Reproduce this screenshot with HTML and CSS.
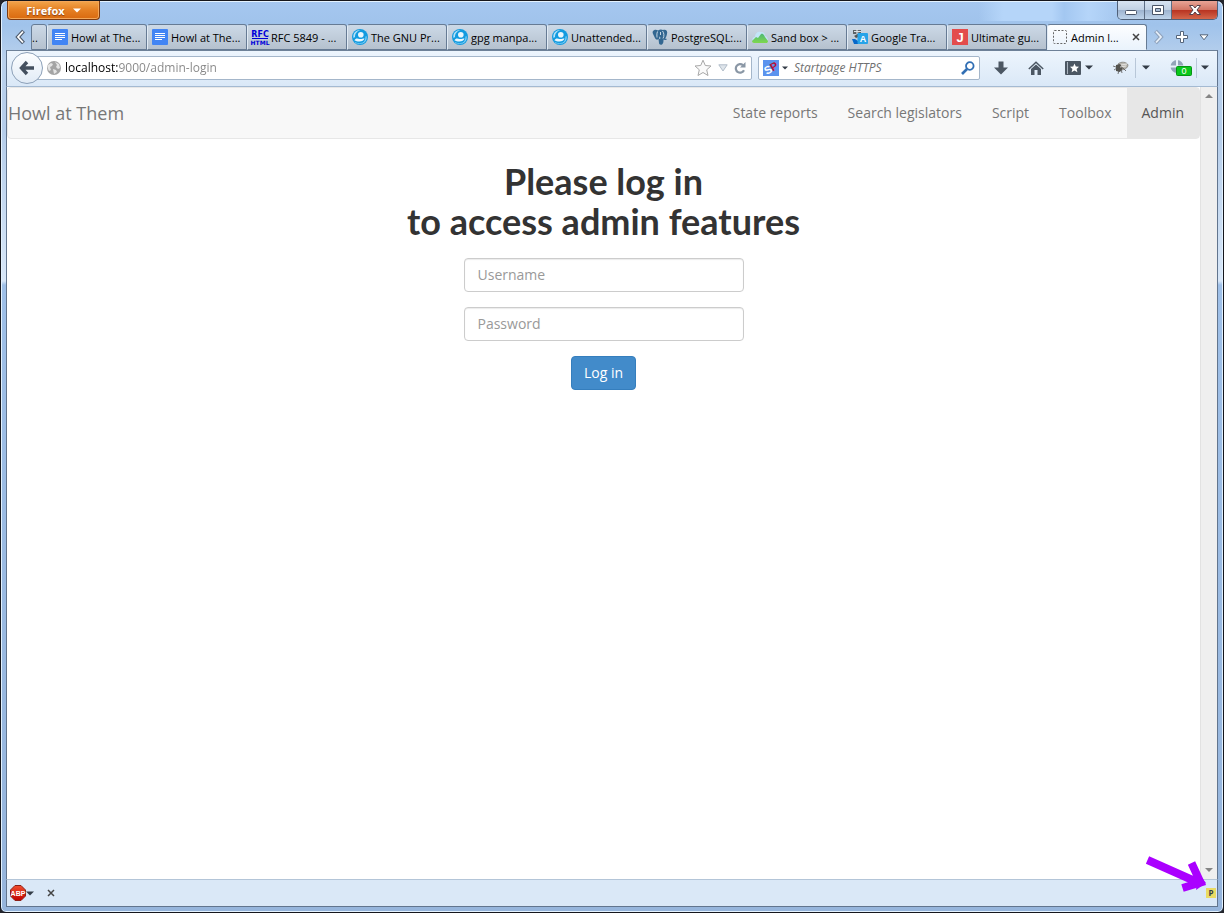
FILE: index.html
```html
<!DOCTYPE html>
<html lang="en">
<head>
<meta charset="utf-8">
<meta name="viewport" content="width=device-width, initial-scale=1">
<title>Admin login</title>
<link rel="stylesheet" href="styles.css">
</head>
<body>
<svg class="defs" aria-hidden="true">
  <defs>
    <linearGradient id="redsign" x1="0" y1="0" x2="0" y2="1"><stop offset="0" stop-color="#f05030"/><stop offset="1" stop-color="#c00000"/></linearGradient>
    <linearGradient id="hill" x1="0" y1="0" x2="0" y2="1"><stop offset="0" stop-color="#4fb878"/><stop offset="1" stop-color="#7fd84c"/></linearGradient>
  </defs>
  <symbol id="doc" viewBox="0 0 16 16"><rect width="16" height="16" rx="1" fill="#4285f4"/><path d="M3 4.500h10M3 6.500h10M3 8.500h10M3 10.500h7" stroke="#fff" stroke-width="1.100"/></symbol>
  <symbol id="swirl" viewBox="0 0 16 16"><circle cx="8" cy="8" r="8" fill="#129be0"/><path d="M1.500 9C.5 4 4 1 8.500 1c-3 1-5.500 3-5.500 7z" fill="#b5e2f8"/><path d="M14.500 7c1 4-1.500 7-5.500 8 3-1.500 4.500-4 4.500-7.500z" fill="#7fcdf4"/><circle cx="8.800" cy="5.800" r="2.800" fill="#e8f6fd"/><path d="M2.500 11.500c1-2.500 3-2 5-1.500s4-1 5-.5c-.5 2-2.500 3-5 3s-3.500-.5-5-1z" fill="#e8f6fd"/><path d="M3 13.500c3 1.500 6.500 1.500 9.500-.5" fill="none" stroke="#7fcdf4" stroke-width=".8"/></symbol>
  <symbol id="down" viewBox="0 0 8 5"><path d="M0 .5h8L4 4.500z" fill="currentColor"/></symbol>
</svg>
<div class="window">
  <header class="titlebar">
    <button class="firefox" type="button">Firefox <svg width="8" height="5"><use href="#down"/></svg></button>
    <div class="wincontrols">
      <button type="button" aria-label="Minimize"><svg width="14" height="12" viewBox="0 0 14 12"><rect x="1.500" y="6.500" width="11" height="4" rx="1" fill="#fff" stroke="#4a5568"/></svg></button>
      <button type="button" aria-label="Restore"><svg width="14" height="12" viewBox="0 0 14 12"><path d="M1.500 1.500h11v9h-11z" fill="#fff" stroke="#4a5568"/><path d="M4.500 4.500h5v3h-5z" fill="#a9bdd5" stroke="#4a5568"/></svg></button>
      <button class="close" type="button" aria-label="Close"><svg width="14" height="12" viewBox="0 0 14 12"><path d="M1.500 1.500h3.500l2 2.500 2-2.500h3.500L9 6l3.500 4.500H9L7 8l-2 2.500H1.500L5 6z" fill="#fff" stroke="#54404a"/></svg></button>
    </div>
  </header>
  <nav class="tabs" aria-label="Tabs">
    <button class="scroll" type="button" aria-label="Scroll tabs left"><svg width="10" height="16" viewBox="0 0 10 16"><path d="M8.500 2L3 8l5.500 6" fill="none" stroke="#4d5a6b" stroke-width="4"/><path d="M8 2.500L3 8l5 5.500" fill="none" stroke="#fff" stroke-width="1.800"/></svg></button>
    <button class="tab stub" type="button">..</button>
    <button class="tab" type="button"><svg class="fav"><use href="#doc"/></svg>Howl at The...</button>
    <button class="tab" type="button"><svg class="fav"><use href="#doc"/></svg>Howl at The...</button>
    <button class="tab" type="button"><svg class="fav" viewBox="0 0 16 16"><text x="8" y="8" class="rfc">RFC</text><path d="M0 9.500h16" stroke="#0000d8"/><text x="8" y="16" class="rfc small">HTML</text></svg>RFC 5849 - ...</button>
    <button class="tab" type="button"><svg class="fav"><use href="#swirl"/></svg>The GNU Pr...</button>
    <button class="tab" type="button"><svg class="fav"><use href="#swirl"/></svg>gpg manpa...</button>
    <button class="tab" type="button"><svg class="fav"><use href="#swirl"/></svg>Unattended...</button>
    <button class="tab" type="button"><svg class="fav" viewBox="0 0 16 16"><path d="M1 2c2-2 4-1 5-.5C8 0 10 .5 11 1c3-1 5 1 4 4-.5 2-1 4-2 4.500l2 .5c-1 1.500-3 1-3.500.5 0 2 0 4-1.500 5-1.500.5-3 0-3-1.500L6.500 10C4 12 3 9 2 7S0 3 1 2z" fill="#336791"/><path d="M5.500 2.500C4.500 5 5 7 5 8.500m2-.5c1 0 1 1 .5 2M10.500 2c1.500 2 2 5 .5 7.500M8.500 3v3" fill="none" stroke="#d8e5ef" stroke-width=".9"/></svg>PostgreSQL:...</button>
    <button class="tab" type="button"><svg class="fav" viewBox="0 0 16 16"><path d="M1 13C-.5 10 1 8 3 8c0-4 3-6 6-5 3 0 4 2 4 4 3 1 3.500 4 2 6z" fill="#c3e5f7"/><path d="M0 12l4-4 2 1 3-4c2-1 3 1 4 3l3 4c0 1.500-1 2-2 2H2c-1 0-2-1-2-2z" fill="url(#hill)"/></svg>Sand box &gt; ...</button>
    <button class="tab" type="button"><svg class="fav" viewBox="0 0 16 16"><path d="M1 1h8v4H1z" fill="#5d6266"/><path d="M2 2.500h7M5 0v5M2 8l5-4" stroke="#dde3e8" stroke-width="1.200"/><path d="M2 7l5-3 2 3-5 2z" fill="#555"/><path d="M0 10h3l3 2v3H2z" fill="#0768c9"/><rect x="5.500" y="4" width="10.500" height="11" rx="1" fill="#27a3e8"/><text x="11" y="13" class="glyph">A</text></svg>Google Tra...</button>
    <button class="tab" type="button"><svg class="fav" viewBox="0 0 16 16"><rect width="16" height="16" fill="#e34c4c"/><text x="8" y="13" class="glyph big">J</text></svg>Ultimate gu...</button>
    <button class="tab active" type="button"><svg class="fav" viewBox="0 0 16 16"><rect x="1.500" y="1.500" width="13" height="13" rx="1" fill="none" stroke="#666" stroke-dasharray="2 1.500"/></svg>Admin l...<svg class="tabclose" width="8" height="8" viewBox="0 0 8 8"><path d="M1 1l6 6M7 1L1 7" stroke="#444" stroke-width="1.500"/></svg></button>
    <div class="tabtools">
      <button type="button" aria-label="Scroll tabs right"><svg width="10" height="16" viewBox="0 0 10 16"><path d="M1.500 2L7 8l-5.500 6" fill="none" stroke="#8fa3bd" stroke-width="4"/><path d="M2 2.500L7 8l-5 5.500" fill="none" stroke="#e7eff8" stroke-width="1.800"/></svg></button>
      <button type="button" aria-label="New tab"><svg width="12" height="12" viewBox="0 0 12 12"><path d="M4.500.5h3v4h4v3h-4v4h-3v-4h-4v-3h4z" fill="#fff" stroke="#55657b"/></svg></button>
      <button type="button" aria-label="List all tabs"><svg width="10" height="7" viewBox="0 0 10 7"><path d="M1 .8h8L5 5.800z" fill="#fff" stroke="#55657b"/></svg></button>
    </div>
  </nav>
  <div class="toolbar">
    <button class="back" type="button" aria-label="Back"><svg width="16" height="16" viewBox="0 0 16 16"><path d="M8 2L2.500 8 8 14M3 8h12" fill="none" stroke="#44505f" stroke-width="3.400"/></svg></button>
    <div class="urlbar">
      <svg width="14" height="14" viewBox="0 0 14 14"><circle cx="7" cy="7" r="7" fill="#a4a4a4"/><path d="M1 4l3-2 2 1-1 2-2 1 1 3-2 1C1 8 0 6 1 4zM8 1l4 2 1 4-2 1-2-2 1-2zM6 8l3 1 1 2-3 2z" fill="#e4e4e4"/></svg>
      <input class="address" type="text" aria-label="Address" value="localhost:9000/admin-login">
      <button type="button" aria-label="Bookmark"><svg width="18" height="18" viewBox="0 0 18 18"><path d="M9 1.200l2.300 5.300 5.700.5-4.300 3.800 1.300 5.700L9 13.500l-5 3 1.300-5.700L1 7l5.700-.5z" fill="#fafafa" stroke="#a8a8a8"/></svg></button>
      <button type="button" aria-label="History"><svg width="10" height="8" viewBox="0 0 10 8"><path d="M.8.8h8.400L5 7z" fill="#dfe5eb" stroke="#b1bdc9"/></svg></button>
      <button type="button" aria-label="Reload"><svg width="12" height="12" viewBox="0 0 12 12"><path d="M9 3.200A4.300 4.300 0 1 0 10 8.300" fill="none" stroke="#8a97a5" stroke-width="2.200"/><path d="M11.500 0v5.500H6z" fill="#8a97a5"/></svg></button>
    </div>
    <div class="searchbar">
      <button class="engine" type="button" aria-label="Search engine"><svg width="16" height="16" viewBox="0 0 16 16"><rect width="16" height="16" fill="#5b93ee"/><g transform="rotate(-30 8 8)"><text x="4.500" y="12" class="glyph sp">S</text><text x="11.500" y="12" class="glyph sp pink">P</text></g></svg><svg width="6" height="4"><use href="#down"/></svg></button>
      <input class="query" type="search" aria-label="Search" placeholder="Startpage HTTPS">
      <button type="button" aria-label="Search"><svg width="14" height="14" viewBox="0 0 14 14"><circle cx="8.800" cy="5" r="3.800" fill="none" stroke="#316fb4" stroke-width="1.800"/><path d="M6 8l-5 5" stroke="#316fb4" stroke-width="2.600"/></svg></button>
    </div>
    <div class="tools">
      <button type="button" aria-label="Downloads"><svg width="14" height="14" viewBox="0 0 14 14"><path d="M4.500.5h5v6H14l-7 7-7-7h4.500z" fill="#4c5763"/></svg></button>
      <button type="button" aria-label="Home"><svg width="16" height="14" viewBox="0 0 16 14"><path d="M.8 8L8 1.200 15.200 8" fill="none" stroke="#4c5763" stroke-width="1.500"/><path d="M8 3.500L13 8v6H9.500V9h-3v5H3V8z" fill="#4c5763"/></svg></button>
      <button type="button" aria-label="Bookmarks"><svg width="16" height="14" viewBox="0 0 16 14"><rect width="16" height="14" rx="1" fill="#4c5763"/><path d="M2.500 1v12" stroke="#aab4bf"/><path d="M9.500 2.500l1.300 3 3.200.3-2.400 2.100.8 3.300-2.900-1.800-2.900 1.800.8-3.300L5 5.800l3.200-.3z" fill="#fff"/></svg><svg width="8" height="5"><use href="#down"/></svg></button>
      <button type="button" aria-label="Firebug"><svg width="16" height="14" viewBox="0 0 16 14"><path d="M5 3c3-3 9-2 10 1 0 3-4 5-7 5z" fill="#b9b7b0" stroke="#77756e" stroke-width=".7"/><path d="M3 4l4-1 3 4-3 4-4-1z" fill="#54534e"/><path d="M0 5l3 1M1 9l3-2M5 13l1-4M9 12L8 8M13 10l-3-3" stroke="#555" stroke-width=".8"/><path d="M8 4l6-1M7 6l6-1" stroke="#eee" stroke-width=".8"/></svg><i class="rule"></i><svg width="8" height="5"><use href="#down"/></svg></button>
      <button class="tight" type="button" aria-label="Network monitor"><svg width="22" height="16" viewBox="0 0 22 16"><circle cx="7" cy="6.500" r="6.500" fill="#93a4b8"/><path d="M7 0v13M0 6.500h14" stroke="#e9f1fa" stroke-width="2"/><rect x="6.500" y="6.500" width="15" height="9" rx="1" fill="#08c81b" stroke="#079315"/><text x="14" y="14" class="count">0</text></svg><i class="rule"></i><svg width="8" height="5"><use href="#down"/></svg></button>
    </div>
  </div>
  <div class="viewport">
    <main class="page">
      <nav class="navbar">
        <a class="brand" href="#">Howl at Them</a>
        <div class="links"><a href="#">State reports</a><a href="#">Search legislators</a><a href="#">Script</a><a href="#">Toolbox</a><a class="current" href="#">Admin</a></div>
      </nav>
      <form class="login">
        <h1>Please log in<br>to access admin features</h1>
        <input type="text" placeholder="Username" aria-label="Username">
        <input type="password" placeholder="Password" aria-label="Password">
        <button type="button">Log in</button>
      </form>
    </main>
    <div class="scrollbar"><svg width="8" height="4" viewBox="0 0 8 4"><path d="M4 0l4 4H0z" fill="#858585"/></svg><svg width="8" height="4" viewBox="0 0 8 4"><path d="M0 0h8L4 4z" fill="#858585"/></svg></div>
  </div>
  <footer class="statusbar">
    <button type="button" aria-label="Adblock Plus"><svg width="16" height="16" viewBox="0 0 16 16"><path d="M5 .5h6L15.500 5v6L11 15.500H5L.5 11V5z" fill="url(#redsign)" stroke="#8c2018"/><text x="8" y="10.500" class="abp">ABP</text></svg><svg width="8" height="5"><use href="#down"/></svg></button>
    <button class="closebar" type="button" aria-label="Close bar"><svg width="8" height="8" viewBox="0 0 8 8"><path d="M1 1l6 6M7 1L1 7" stroke="#444" stroke-width="1.500"/></svg></button>
    <button class="proxy" type="button">P</button>
  </footer>
  <svg class="pointer" width="62" height="38" viewBox="0 0 62 38" aria-hidden="true"><path d="M2.500 5L52 27M46.500 8l9 19.500L37.500 33" fill="none" stroke="#aa00ff" stroke-width="8"/><path d="M53 18l8 10-10 7z" fill="#aa00ff"/></svg>
</div>
</body>
</html>
```
FILE: styles.css
```css
* { box-sizing: border-box; }
body { margin: 0; background: #23252c; font-family: "Open Sans", "Noto Sans", sans-serif; }
button, input { font: inherit; color: inherit; margin: 0; padding: 0; border: 0; background: none; }
input { outline: 0; min-width: 0; }
a { color: inherit; text-decoration: none; }
svg { display: block; flex: none; }
.defs { position: absolute; width: 0; height: 0; }

/* Window frame */
.window {
  position: relative;
  display: flex;
  flex-direction: column;
  min-height: 100vh;
  padding: 0 5px 5px;
  border: 1px solid #15161c;
  border-radius: 7px 7px 6px 6px;
  box-shadow: inset 0 0 0 1px #e3f2ff;
  background:
    linear-gradient(90deg, transparent 80%, #b5d5f9 82%, #b5d5f9 86%, #a3c7f1 87%, #b5d5f9 89%, transparent 92%) 0 0 / 100% 20px no-repeat,
    linear-gradient(#a5c7f0, #a0c3eb 24px, #bad1ec 60px, #b5cdea 130px, #d8e7f8 280px, #9fc0e8 284px, #96b5dc);
  font-size: 11px;
  color: #000;
}

.titlebar { display: flex; justify-content: space-between; align-items: flex-start; height: 23px; }
.firefox {
  display: flex; align-items: center; justify-content: center; gap: 8px;
  width: 93px; height: 19px; margin-left: 1px;
  border: 1px solid #7e3b10; border-top: 0; border-radius: 0 0 4px 4px;
  background: linear-gradient(#f2a54c, #e58023 50%, #d9690f);
  box-shadow: inset 0 0 0 1px #f3a75a;
  color: #fff; font-weight: 700; text-shadow: 0 1px 1px #8a3d0a;
}
.wincontrols { display: flex; height: 19px; border: 1px solid #4f6078; border-top: 0; border-radius: 0 0 5px 5px; overflow: hidden; }
.wincontrols button { display: grid; place-items: center; width: 27px; border-right: 1px solid #5d6d84; background: linear-gradient(#d8e4f2, #c1d1e4 48%, #9db3cf 50%, #bed3ea); }
.wincontrols .close { width: 45px; border: 0; background: linear-gradient(#e7a496, #d27766 48%, #b83220 50%, #d4674b); }

.tabs { display: flex; height: 26px; padding-left: 1px; }
.scroll { display: grid; place-items: center; width: 24px; padding-left: 2px; }
.tab {
  display: flex; align-items: center; gap: 3px;
  flex: 1 1 100px; min-width: 0; padding: 0 4px;
  border: 1px solid #667b94; border-left-color: #e1ebf5; border-radius: 3px 3px 0 0;
  background: linear-gradient(#ccd9e7, #b5c1ce);
  white-space: nowrap; overflow: hidden;
}
.stub { flex: 0 0 16px; padding: 0; border-left-color: #667b94; }
.fav { width: 16px; height: 16px; overflow: visible; }
.active { border-bottom-color: #eaf3fc; background: linear-gradient(#fdfeff, #eaf3fc); }
.tabclose { margin-left: auto; margin-right: 2px; }
.tabtools { display: flex; align-items: center; justify-content: space-between; width: 71px; padding: 0 9px 0 7px; }
.rfc { font: 700 8px "DejaVu Sans", sans-serif; text-anchor: middle; fill: #0000d8; }
.rfc.small { font-size: 6px; }
.glyph { font: 700 9px "Liberation Sans", sans-serif; text-anchor: middle; fill: #fff; }
.glyph.big { font-size: 13px; }
.glyph.sp { font-size: 11px; }
.glyph.pink { fill: #b51238; }
.count { font: 9px "Liberation Sans", sans-serif; text-anchor: middle; fill: #fff; }
.abp { font: 700 7px "Liberation Sans", sans-serif; text-anchor: middle; fill: #fff; }

/* Navigation toolbar */
.toolbar {
  display: flex; align-items: center; height: 37px; padding: 0 8px 2px 4px;
  border: 1px solid #62758e; border-top-color: #6e8198; border-bottom-color: #a4bad2;
  background: linear-gradient(#edf5fd, #dae8f7);
  color: #333c47;
}
.back {
  position: relative; z-index: 1; display: grid; place-items: center;
  width: 32px; height: 32px; margin-right: -10px;
  border: 1px solid #8ca0b8; border-radius: 50%; background: linear-gradient(#fdfeff, #e1ebf6);
}
.urlbar, .searchbar { display: flex; align-items: center; height: 24px; border: 1px solid #a4b6ca; border-radius: 2px; background: #fff; }
.urlbar { flex: 1; gap: 6px; padding: 0 5px 0 13px; }
.address {
  flex: 1; height: 20px; margin-left: -2px;
  font-size: 12px;
  background: linear-gradient(90deg, #000 53px, #858585 53px);
  -webkit-background-clip: text; background-clip: text;
  -webkit-text-fill-color: transparent;
}
.searchbar { width: 222px; gap: 6px; margin-left: 6px; padding: 0 4px; }
.engine { display: flex; align-items: center; gap: 3px; }
.query { flex: 1; appearance: none; font-size: 12px; font-style: italic; }
.query::placeholder { color: #707070; opacity: 1; }
.tools { display: flex; align-items: center; justify-content: space-between; width: 215px; margin-left: 14px; }
.tools button { display: flex; align-items: center; gap: 4px; }
.tools .tight { gap: 2px; }
.rule { width: 1px; height: 20px; margin: 0 2px; background: #b8c7d8; }

/* Page */
.viewport { display: flex; flex: 1; border: solid #62758e; border-width: 0 1px; background: #fff; }
.page { flex: 1; min-width: 0; font-size: 14px; color: #333; }
.navbar { display: flex; flex-wrap: wrap; justify-content: space-between; border: 1px solid #e7e7e7; border-radius: 4px; background: #f8f8f8; color: #777; line-height: 20px; }
.brand { padding: 15px 0; font-size: 18px; }
.links { display: flex; flex-wrap: wrap; }
.links a { padding: 15px; }
.links .current { background: #e7e7e7; color: #555; }
.login { display: flex; flex-direction: column; align-items: center; gap: 15px; padding: 22px 15px; }
.login h1 { margin: 0 0 2px; font: 700 36px/40px Lato, "Open Sans", sans-serif; text-align: center; }
.login input { width: 280px; max-width: 100%; height: 34px; padding: 0 13px 2px; border: 1px solid #ccc; border-radius: 4px; box-shadow: inset 0 1px 1px #ececec; }
.login input::placeholder { color: #999; opacity: 1; }
.login button { height: 34px; padding: 0 12px 2px; border: 1px solid #357ebd; border-radius: 4px; background: #428bca; color: #fff; }
.scrollbar { display: flex; flex-direction: column; justify-content: space-between; align-items: center; width: 17px; padding: 7px 0; border-left: 1px solid #e2e2e2; background: #efefef; }

.statusbar { display: flex; align-items: center; height: 28px; padding: 0 1px 0 3px; border: 1px solid #62758e; border-top-color: #b3c5d8; background: #dae8f7; color: #333c47; }
.statusbar button { display: flex; align-items: center; }
.statusbar .closebar { margin-left: 13px; }
.statusbar .proxy { justify-content: center; width: 10px; height: 10px; margin-left: auto; background: #eadb63; font-size: 8px; font-weight: 700; line-height: 10px; }
.pointer { position: absolute; right: 16px; bottom: 19px; }
```
